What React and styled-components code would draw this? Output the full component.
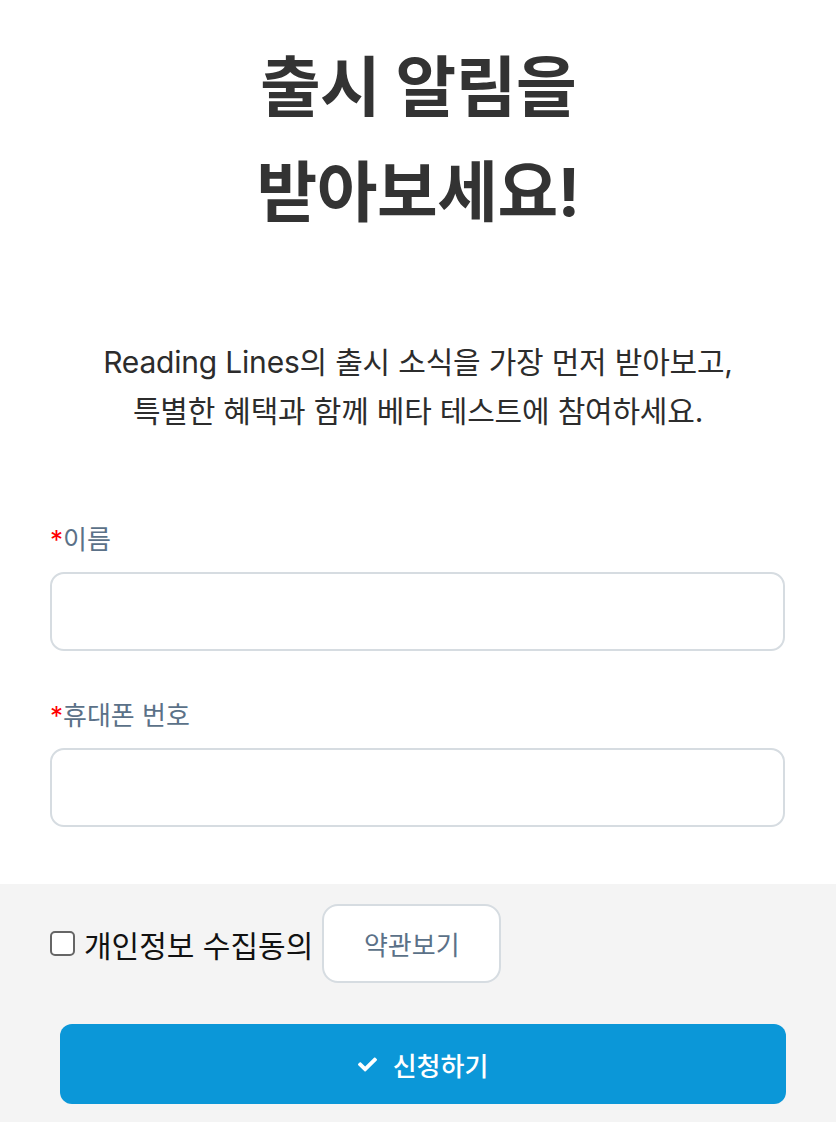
import styled, { createGlobalStyle } from "styled-components";
import { FaCheck } from "react-icons/fa";

const GlobalStyle = createGlobalStyle`
	* {
		box-sizing: border-box;
	}
	body {
		margin: 0;
		background: #fff;
		font-family: "Inter", "Noto Sans CJK KR", sans-serif;
	}
`;

const App = () => {
	return (
		<Page>
			<GlobalStyle />
			<Intro>
				<Title>
					출시 알림을
					<br />
					받아보세요!
				</Title>
				<Lead>
					Reading Lines의 출시 소식을 가장 먼저 받아보고,
					<br />
					특별한 혜택과 함께 베타 테스트에 참여하세요.
				</Lead>
			</Intro>

			<Form>
				<Field>
					<Label>
						<Required>*</Required>이름
					</Label>
					<Input type="text" />
				</Field>
				<Field>
					<Label>
						<Required>*</Required>휴대폰 번호
					</Label>
					<Input type="tel" />
				</Field>
			</Form>

			<Footer>
				<AgreeRow>
					<CheckLabel>
						<Checkbox type="checkbox" />
						개인정보 수집동의
					</CheckLabel>
					<TermsButton type="button">약관보기</TermsButton>
				</AgreeRow>
				<SubmitButton type="button">
					<FaCheck size={19} />
					신청하기
				</SubmitButton>
			</Footer>
		</Page>
	);
};

export default App;

export const Page = styled.div`
	width: 836px;
	min-height: 1122px;
	display: flex;
	flex-direction: column;
`;

export const Intro = styled.section`
	display: flex;
	flex-direction: column;
	align-items: center;
	padding-top: 35px;
`;

export const Title = styled.h1`
	margin: 0;
	font-size: 66px;
	line-height: 105px;
	font-weight: 700;
	color: #333;
	text-align: center;
	letter-spacing: -0.5px;
`;

export const Lead = styled.p`
	margin: 93px 0 0;
	font-size: 30px;
	line-height: 49px;
	font-weight: 400;
	color: #2c2c2c;
	text-align: center;
	letter-spacing: -0.2px;
`;

export const Form = styled.section`
	display: flex;
	flex-direction: column;
	gap: 47px;
	padding: 86px 51px 57px 50px;
`;

export const Field = styled.div`
	display: flex;
	flex-direction: column;
	gap: 14px;
`;

export const Label = styled.label`
	font-size: 26px;
	line-height: 36px;
	color: #5b7188;
`;

export const Required = styled.span`
	color: #f00;
`;

export const Input = styled.input`
	height: 79px;
	width: 100%;
	border: 2px solid #d6dce1;
	border-radius: 14px;
	background: #fff;
	font-size: 24px;
	padding: 0 20px;
	outline: none;
`;

export const Footer = styled.section`
	flex: 1;
	background: #f4f4f4;
	display: flex;
	flex-direction: column;
	gap: 41px;
	padding: 20px 50px 18px 50px;
`;

export const AgreeRow = styled.div`
	display: flex;
	align-items: center;
	gap: 9px;
`;

export const CheckLabel = styled.label`
	display: flex;
	align-items: center;
	gap: 9px;
	font-size: 30px;
	color: #111;
`;

export const Checkbox = styled.input`
	appearance: none;
	margin: 0;
	width: 25px;
	height: 25px;
	border: 2px solid #666;
	border-radius: 5px;
	background: #fff;
`;

export const TermsButton = styled.button`
	width: 179px;
	height: 79px;
	border: 2px solid #d6dce1;
	border-radius: 16px;
	background: #fff;
	font-family: inherit;
	font-size: 26px;
	color: #5b7188;
`;

export const SubmitButton = styled.button`
	margin-left: 10px;
	height: 80px;
	border: none;
	border-radius: 12px;
	background: #0b97d8;
	color: #fff;
	font-family: inherit;
	font-size: 26px;
	font-weight: 500;
	display: flex;
	align-items: center;
	justify-content: center;
	gap: 16px;
`;
